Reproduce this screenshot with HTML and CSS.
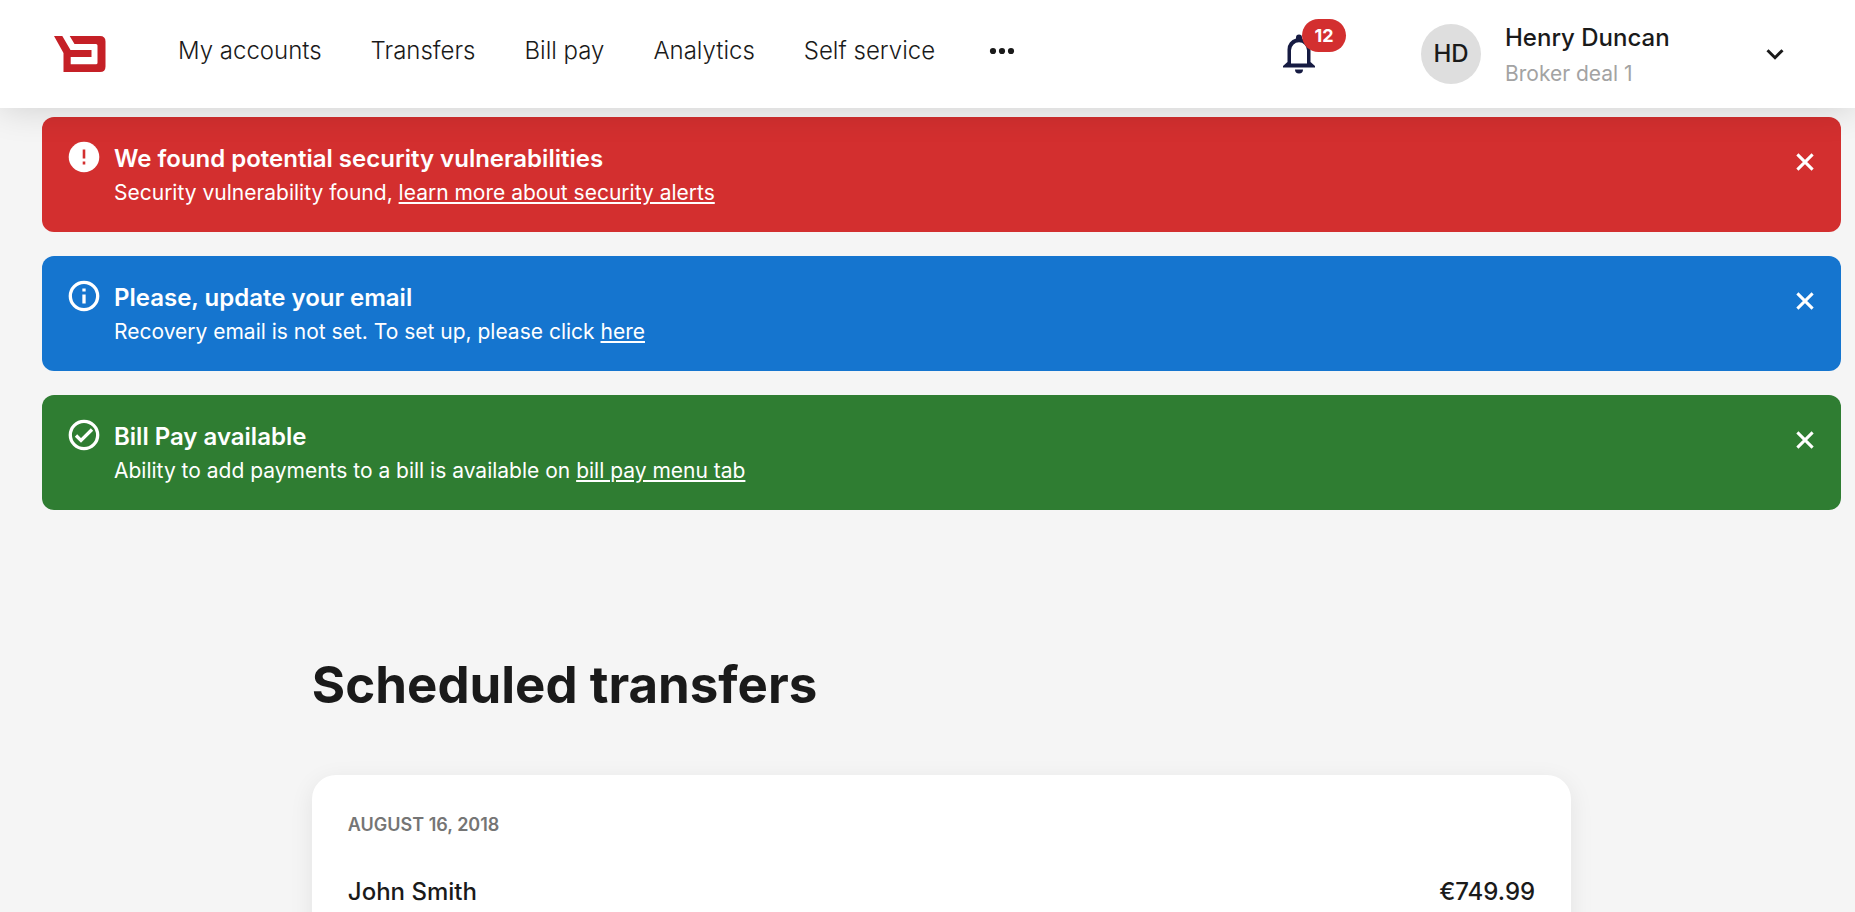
FILE: index.html
```html
<!DOCTYPE html>
<html lang="en">
<head>
<meta charset="utf-8">
<meta name="viewport" content="width=device-width, initial-scale=1">
<title>Scheduled transfers</title>
<link rel="stylesheet" href="styles.css">
</head>
<body>
<header class="topbar">
  <a class="logo" href="#" aria-label="Home">
    <svg width="52" height="36" viewBox="0 0 52 36" fill="#c52026"><path d="M0 0H8.300L16.500 14H37.500V21H16.700V28.300H42Q43.500 28.300 43.500 26.800V9.500Q43.500 8 42 8H20.500L15.700 0H46Q51.500 0 51.500 5.500V30.500Q51.500 36 46 36H9.500V17Z"/></svg>
  </a>
  <nav class="nav" aria-label="Main">
    <a href="#">My accounts</a>
    <a href="#">Transfers</a>
    <a href="#">Bill pay</a>
    <a href="#">Analytics</a>
    <a href="#">Self service</a>
    <button class="icon-button more" type="button" aria-label="More">
      <svg width="36" height="36" viewBox="0 0 36 36" fill="#1a1a1a"><circle cx="9" cy="18" r="3.100"/><circle cx="18" cy="18" r="3.100"/><circle cx="27" cy="18" r="3.100"/></svg>
    </button>
  </nav>
  <button class="icon-button bell" type="button" aria-label="Notifications, 12 new">
    <svg width="36" height="40" viewBox="0 0 36 40" fill="#161b42"><path fill-rule="evenodd" d="M18 0.500A3 3 0 0 1 21 3.500V4.600A11 11 0 0 1 29.500 15.500V28L34 32V33.500H2V32L6.500 28V15.500A11 11 0 0 1 15 4.600V3.500A3 3 0 0 1 18 0.500ZM18 8.300A8 8 0 0 0 10 16.300V29.500H26V16.300A8 8 0 0 0 18 8.300Z"/><path d="M14 35.500H22A4 4 0 0 1 14 35.500Z"/></svg>
    <span class="badge">12</span>
  </button>
  <button class="profile" type="button">
    <span class="avatar">HD</span>
    <span class="who"><span class="name">Henry Duncan</span><span class="role">Broker deal 1</span></span>
    <svg width="36" height="36" viewBox="0 0 36 36" fill="none" stroke="#1a1a1a" stroke-width="3"><path d="M10.500 14.200L18 21.700L25.500 14.200"/></svg>
  </button>
</header>

<section class="alerts" aria-label="Alerts">
  <article class="alert error">
    <svg class="alert-icon" viewBox="0 0 36 36"><circle cx="18" cy="18" r="15.300" fill="#fff"/><path d="M18 10.500V19.500M18 22.500V25.500" stroke="#d32f2f" stroke-width="2.600"/></svg>
    <div class="alert-body">
      <h2>We found potential security vulnerabilities</h2>
      <p>Security vulnerability found, <a href="#">learn more about security alerts</a></p>
    </div>
    <button class="icon-button" type="button" aria-label="Close"><svg class="close" viewBox="0 0 24 24"><path d="M5.900 5.900L18.100 18.100M18.100 5.900L5.900 18.100"/></svg></button>
  </article>
  <article class="alert info">
    <svg class="alert-icon" viewBox="0 0 36 36" fill="none" stroke="#fff" stroke-width="3.300"><circle cx="18" cy="18" r="13.700"/><path d="M18 10.500V13.500M18 16.500V25.500"/></svg>
    <div class="alert-body">
      <h2>Please, update your email</h2>
      <p>Recovery email is not set. To set up, please click <a href="#">here</a></p>
    </div>
    <button class="icon-button" type="button" aria-label="Close"><svg class="close" viewBox="0 0 24 24"><path d="M5.900 5.900L18.100 18.100M18.100 5.900L5.900 18.100"/></svg></button>
  </article>
  <article class="alert success">
    <svg class="alert-icon" viewBox="0 0 36 36" fill="none" stroke="#fff" stroke-width="3.300"><circle cx="18" cy="18" r="13.700"/><path d="M10 18.500L15 23.500L26 12.500"/></svg>
    <div class="alert-body">
      <h2>Bill Pay available</h2>
      <p>Ability to add payments to a bill is available on <a href="#">bill pay menu tab</a></p>
    </div>
    <button class="icon-button" type="button" aria-label="Close"><svg class="close" viewBox="0 0 24 24"><path d="M5.900 5.900L18.100 18.100M18.100 5.900L5.900 18.100"/></svg></button>
  </article>
</section>

<main class="page">
  <div class="content">
    <h1>Scheduled transfers</h1>
    <section class="card">
      <h3>AUGUST 16, 2018</h3>
      <div class="transfer"><span>John Smith</span><span>€749.99</span></div>
    </section>
  </div>
</main>
</body>
</html>
```
FILE: styles.css
```css
* { box-sizing: border-box; }

body {
  margin: 0;
  background: #f5f5f5;
  color: #1a1a1a;
  font-family: Inter, "Liberation Sans", sans-serif;
  overflow: hidden;
}

h1, h2, h3, p { margin: 0; }

button {
  font: inherit;
  color: inherit;
  background: none;
  border: 0;
  padding: 0;
  cursor: pointer;
}

svg { display: block; flex: none; }

.topbar {
  position: relative;
  z-index: 1;
  display: flex;
  align-items: center;
  height: 108px;
  padding: 0 62px 0 54px;
  background: #fff;
  box-shadow: 0 0 36px rgba(0, 0, 0, 0.16);
}

.nav {
  display: flex;
  align-items: center;
  gap: 49px;
  margin-left: 72px;
  padding-bottom: 6px;
  font-size: 24px;
  font-weight: 300;
  line-height: 36px;
  white-space: nowrap;
}

.nav a { color: inherit; text-decoration: none; }

.bell {
  position: relative;
  margin-left: auto;
  margin-right: 104px;
}

.badge {
  position: absolute;
  left: 21px;
  top: -15px;
  min-width: 44px;
  height: 33px;
  border-radius: 17px;
  background: #d32f2f;
  color: #fff;
  font-size: 18px;
  font-weight: 700;
  line-height: 33px;
  text-align: center;
}

.profile {
  display: flex;
  align-items: center;
  width: 372px;
  text-align: left;
}

.avatar {
  width: 60px;
  height: 60px;
  border-radius: 50%;
  background: #dedede;
  font-size: 24px;
  font-weight: 500;
  line-height: 60px;
  text-align: center;
}

.who {
  display: flex;
  flex: 1;
  flex-direction: column;
  margin-left: 24px;
  padding-top: 4px;
  line-height: 36px;
}

.name { font-size: 24px; font-weight: 500; }
.role { font-size: 21px; color: #a3a3a3; }

.alerts {
  display: grid;
  gap: 24px;
  padding: 9px 14px 0 42px;
}

.alert {
  display: flex;
  align-items: flex-start;
  gap: 12px;
  padding: 22px 21px 24px 24px;
  border-radius: 12px;
  color: #fff;
}

.error { background: #d32f2f; }
.info { background: #1575cf; }
.success { background: #2f7d32; }

.alert-icon { width: 36px; height: 36px; }
.alert-body { flex: 1; padding-top: 2px; }
.alert h2 { font-size: 24px; font-weight: 600; line-height: 36px; }
.alert p { font-size: 21px; line-height: 31px; }
.alert a { color: inherit; }
.alert .icon-button { padding-top: 8px; }

.close {
  width: 30px;
  height: 30px;
  fill: none;
  stroke: #fff;
  stroke-width: 2.4;
}

.page { padding: 139px 14px 48px 42px; }

.content {
  width: 70%;
  margin: 0 auto;
}

h1 {
  font-size: 51px;
  font-weight: 700;
  line-height: 72px;
}

.card {
  margin-top: 54px;
  padding: 36px;
  border-radius: 24px;
  background: #fff;
  box-shadow: 0 6px 24px rgba(0, 0, 0, 0.08);
}

.card h3 {
  color: #757575;
  font-size: 18px;
  font-weight: 600;
  line-height: 27px;
}

.transfer {
  display: flex;
  justify-content: space-between;
  margin-top: 36px;
  font-size: 24px;
  font-weight: 500;
  line-height: 36px;
}
```
